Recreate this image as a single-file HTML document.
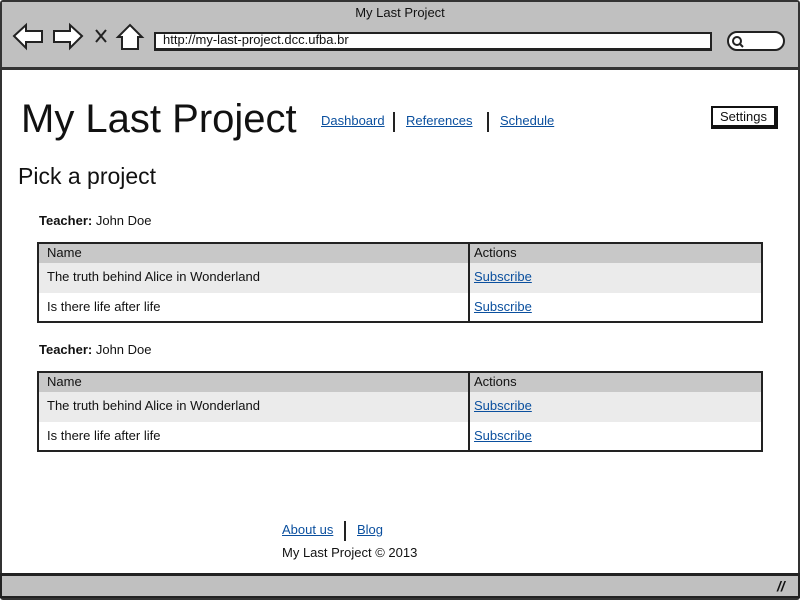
<!DOCTYPE html>
<html><head><style>
*{margin:0;padding:0;box-sizing:border-box}
body{width:800px;height:600px;background:#fff;font-family:"Liberation Sans",sans-serif;color:#111;position:relative;overflow:hidden}
.a{position:absolute}
a{color:#0a4f9e;text-decoration:underline}
.tb{position:absolute;left:37px;width:726px;height:81px;border:2px solid #222}
.tb .r{position:absolute;left:0;right:0;font-size:13px;padding-left:8px}
.tb .h{top:0;height:19px;background:#c8c8c8;line-height:17px}
.tb .r1{top:19px;height:30px;background:#ebebeb;line-height:27px}
.tb .r2{top:49px;height:30px;line-height:27px}
.tb .c{position:absolute;left:435px;font-size:13px}
.tb .v{position:absolute;left:429px;top:0;bottom:0;width:2px;background:#222}
</style></head><body>
<div class="a" style="left:0;top:0;width:800px;height:600px;border:2px solid #333;border-radius:3px"></div>
<div class="a" style="left:2px;top:2px;width:796px;height:68px;background:#c0c0c0;border-bottom:3px solid #333"></div>
<div class="a" style="left:0;top:5px;width:800px;text-align:center;font-size:13px">My Last Project</div>
<svg class="a" style="left:12px;top:22px" width="135" height="30" viewBox="0 0 135 30">
<path d="M2 14 L14 3 L14 9 L30 9 L30 20 L14 20 L14 26 Z" fill="#fff" stroke="#222" stroke-width="2"/>
<path d="M70 14 L58 3 L58 9 L42 9 L42 20 L58 20 L58 26 Z" fill="#fff" stroke="#222" stroke-width="2"/>
<path d="M84 8 L94 20 M94 8 L84 20" stroke="#222" stroke-width="2"/>
<path d="M106 15 L118 3 L130 15 L126 15 L126 27 L110 27 L110 15 Z" fill="#fff" stroke="#222" stroke-width="2"/>
</svg>
<div class="a" style="left:154px;top:32px;width:558px;height:19px;background:#fff;border:2px solid #222;border-bottom-width:3px;font-size:13px;line-height:12px;padding-left:7px">http://my-last-project.dcc.ufba.br</div>
<div class="a" style="left:727px;top:31px;width:58px;height:20px;background:#fff;border:2px solid #222;border-radius:10px"></div>
<svg class="a" style="left:731px;top:35px" width="14" height="14"><circle cx="6" cy="6" r="4" fill="none" stroke="#222" stroke-width="2"/><path d="M9 9 L12 12" stroke="#222" stroke-width="2"/></svg>
<div class="a" style="left:21px;top:96px;font-size:40px;line-height:46px">My Last Project</div>
<div class="a" style="left:321px;top:113px;font-size:13px"><a>Dashboard</a></div>
<div class="a" style="left:393px;top:112px;width:2px;height:20px;background:#222"></div>
<div class="a" style="left:406px;top:113px;font-size:13px"><a>References</a></div>
<div class="a" style="left:487px;top:112px;width:2px;height:20px;background:#222"></div>
<div class="a" style="left:500px;top:113px;font-size:13px"><a>Schedule</a></div>
<div class="a" style="left:711px;top:106px;width:67px;height:23px;border:2px solid #111;border-right-width:4px;border-bottom-width:4px;font-size:13px;text-align:center;line-height:18px;background:#fff">Settings</div>
<div class="a" style="left:18px;top:163px;font-size:23px">Pick a project</div>
<div class="a" style="left:39px;top:213px;font-size:13px"><b>Teacher:</b> John Doe</div>
<div class="tb" style="top:242px">
<div class="r h">Name</div><div class="r r1">The truth behind Alice in Wonderland</div><div class="r r2">Is there life after life</div>
<div class="v"></div>
<div class="c" style="top:0;line-height:17px">Actions</div>
<div class="c" style="top:19px;line-height:27px"><a>Subscribe</a></div>
<div class="c" style="top:49px;line-height:27px"><a>Subscribe</a></div>
</div>
<div class="a" style="left:39px;top:342px;font-size:13px"><b>Teacher:</b> John Doe</div>
<div class="tb" style="top:371px">
<div class="r h">Name</div><div class="r r1">The truth behind Alice in Wonderland</div><div class="r r2">Is there life after life</div>
<div class="v"></div>
<div class="c" style="top:0;line-height:17px">Actions</div>
<div class="c" style="top:19px;line-height:27px"><a>Subscribe</a></div>
<div class="c" style="top:49px;line-height:27px"><a>Subscribe</a></div>
</div>
<div class="a" style="left:282px;top:522px;font-size:13px"><a>About us</a></div>
<div class="a" style="left:344px;top:521px;width:2px;height:20px;background:#222"></div>
<div class="a" style="left:357px;top:522px;font-size:13px"><a>Blog</a></div>
<div class="a" style="left:282px;top:545px;font-size:13px">My Last Project © 2013</div>
<div class="a" style="left:0;top:573px;width:800px;height:25px;background:#c0c0c0;border:2px solid #222;border-top-width:3px"></div>
<div class="a" style="left:777px;top:578px;font-size:14px;font-weight:bold;font-style:italic">//</div>
</body></html>
